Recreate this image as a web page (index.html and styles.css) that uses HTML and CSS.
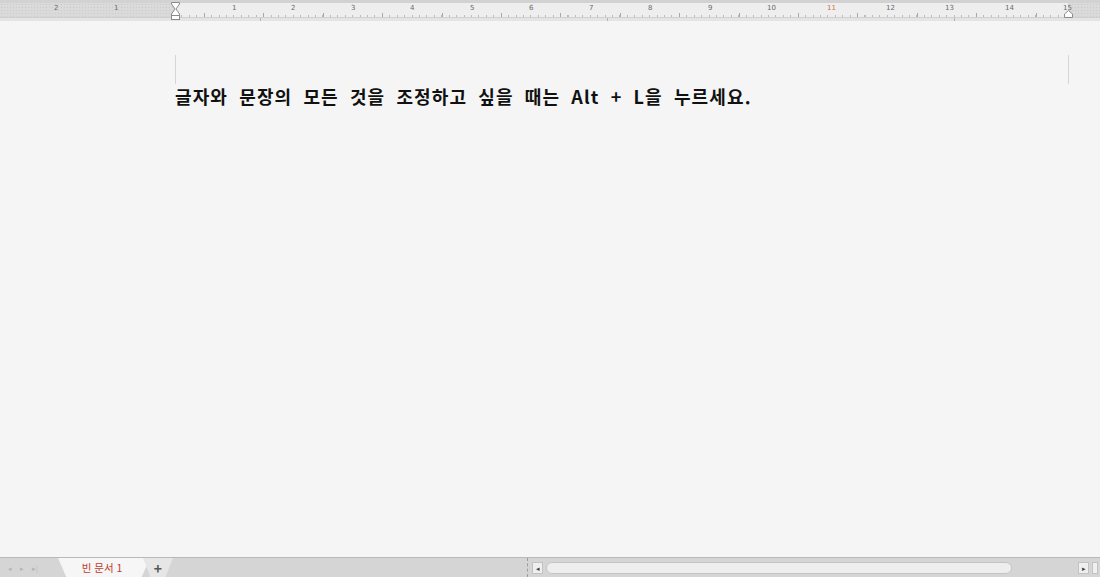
FILE: index.html
```html
<!DOCTYPE html>
<html lang="ko">
<head>
    <meta charset="UTF-8">
    <title>빈 문서 1</title>
    <link rel="stylesheet" href="styles.css">
</head>
<body>
<div class="app">
    <div class="ruler-wrap">
        <div class="ruler">
            <div class="margin-left">
                <span class="num" style="left:55px">2</span>
                <span class="num" style="left:115px">1</span>
            </div>
            <div class="ruler-body">
                <span class="num" style="left:58px">1</span>
                <span class="num" style="left:117px">2</span>
                <span class="num" style="left:177px">3</span>
                <span class="num" style="left:236px">4</span>
                <span class="num" style="left:296px">5</span>
                <span class="num" style="left:355px">6</span>
                <span class="num" style="left:415px">7</span>
                <span class="num" style="left:474px">8</span>
                <span class="num" style="left:534px">9</span>
                <span class="num" style="left:593px">10</span>
                <span class="num red" style="left:653px">11</span>
                <span class="num" style="left:712px">12</span>
                <span class="num" style="left:771px">13</span>
                <span class="num" style="left:831px">14</span>
                <span class="num" style="left:889px">15</span>
                <svg class="indent-l" width="9" height="18" viewBox="0 0 9 18">
                    <path d="M0.5 0.5 H8.5 V2 L5 7 L8.5 12 V13.5 H0.5 V12 L4 7 L0.5 2 Z" fill="#fff" stroke="#8a8a8a"/>
                    <rect x="0.5" y="13.5" width="8" height="4" fill="#fff" stroke="#8a8a8a"/>
                </svg>
                <svg class="indent-r" width="9" height="8" viewBox="0 0 9 8">
                    <path d="M4.5 0.5 L8.5 4 V7.5 H0.5 V4 Z" fill="#fff" stroke="#8a8a8a"/>
                </svg>
            </div>
            <div class="margin-right"></div>
        </div>
        <div class="tab-strip"></div>
    </div>

    <div class="page">
        <div class="corner left"></div>
        <p class="line">글자와 문장의 모든 것을 조정하고 싶을 때는 Alt + L을 누르세요.</p>
        <div class="corner right"></div>
    </div>

    <div class="statusbar">
        <div class="nav">
            <span>◂</span><span>▸</span><span>▸|</span>
        </div>
        <div class="doc-tab">빈 문서 1</div>
        <div class="add-tab">+</div>
        <div class="spacer"></div>
        <div class="hscroll">
            <span class="sbtn">◂</span>
            <div class="track"><div class="thumb"></div></div>
            <span class="sbtn">▸</span>
            <span class="sbtn edge"></span>
        </div>
    </div>
</div>
</body>
</html>
```

FILE: styles.css
```css
* {
    box-sizing: border-box;
}
html, body {
    margin: 0;
    height: 100%;
}
body {
    font-family: "Noto Sans CJK KR", "Noto Sans", sans-serif;
    background: #f5f5f5;
    overflow: hidden;
}
.app {
    display: flex;
    flex-direction: column;
    height: 577px;
    width: 1100px;
}

/* ruler */
.ruler-wrap {
    border-top: 3px solid #d2d2d2;
    background: #e2e2e2;
}
.ruler {
    display: flex;
    height: 14px;
    font-family: "DejaVu Sans", sans-serif;
    font-size: 7px;
    color: #6a6a6a;
}
.margin-left, .margin-right {
    position: relative;
    background-color: #dadada;
    background-image: radial-gradient(#cbcbcb 0.6px, transparent 0.7px);
    background-size: 3px 3px;
}
.margin-left {
    width: 175px;
}
.margin-right {
    flex: 1;
}
.ruler-body {
    position: relative;
    z-index: 1;
    width: 893px;
    background-color: #eeeeee;
    background-image:
        repeating-linear-gradient(90deg, transparent 0 29px, #a8a8a8 29px 30px, transparent 30px 59.4px),
        repeating-linear-gradient(90deg, transparent 0 6.4px, #bcbcbc 6.4px 7.425px);
    background-size: 100% 4px, 100% 2px;
    background-position: 0 100%, 0 100%;
    background-repeat: repeat-x;
}
.num {
    position: absolute;
    top: 1px;
    line-height: 8px;
    transform: translateX(-1px);
}
.num.red {
    color: #c9743a;
}
.indent-l {
    position: absolute;
    left: -4px;
    top: -1px;
}
.indent-r {
    position: absolute;
    right: -5px;
    top: 7px;
}
.tab-strip {
    height: 4px;
    border-top: 1px solid #d0d0d0;
    background-color: #e4e4e4;
    background-image: repeating-linear-gradient(90deg, transparent 0 260px, #b4b4b4 260px 261px, transparent 261px 347px);
}

/* page */
.page {
    flex: 1;
    position: relative;
    padding: 62px 0 0 175px;
    background: #f5f5f5;
}
.corner {
    position: absolute;
    top: 34px;
    width: 1px;
    height: 29px;
    background: #d6d6d6;
}
.corner.left {
    left: 175px;
}
.corner.right {
    left: 1068px;
}
.line {
    margin: 0;
    font-size: 18px;
    font-weight: 700;
    color: #111;
    word-spacing: 5px;
    letter-spacing: 1.12px;
}

/* status bar */
.statusbar {
    display: flex;
    align-items: stretch;
    height: 20px;
    border-top: 1px solid #b9b9b9;
    background: #d5d5d5;
    font-size: 11px;
}
.nav {
    display: flex;
    gap: 8px;
    align-items: center;
    padding-left: 8px;
    width: 64px;
    color: #b4b4b4;
    font-size: 7px;
}
.doc-tab {
    display: flex;
    align-items: center;
    justify-content: center;
    width: 92px;
    margin-left: -6px;
    padding-right: 4px;
    background: #f6f6f6;
    color: #c23a2c;
    clip-path: polygon(0 0, 100% 0, 91% 100%, 9% 100%);
    font-size: 10.5px;
}
.add-tab {
    display: flex;
    align-items: center;
    justify-content: center;
    width: 30px;
    margin-left: -7px;
    background: #e6e6e6;
    color: #555;
    font-size: 14px;
    font-weight: 700;
    clip-path: polygon(0 0, 100% 0, 75% 100%, 25% 100%);
}
.spacer {
    flex: 1;
    border-right: 1px dashed #9c9c9c;
    margin-right: 4px;
}
.hscroll {
    display: flex;
    align-items: center;
    gap: 3px;
    width: 568px;
    padding-right: 2px;
}
.sbtn {
    display: flex;
    align-items: center;
    justify-content: center;
    width: 11px;
    height: 12px;
    background: #efefef;
    border: 1px solid #c2c2c2;
    font-size: 7px;
    color: #444;
}
.sbtn.edge {
    width: 6px;
}
.track {
    flex: 1;
    height: 12px;
}
.thumb {
    width: 466px;
    height: 100%;
    border: 1px solid #c4c4c4;
    border-radius: 6px;
    background: #eeeeee;
}
```
